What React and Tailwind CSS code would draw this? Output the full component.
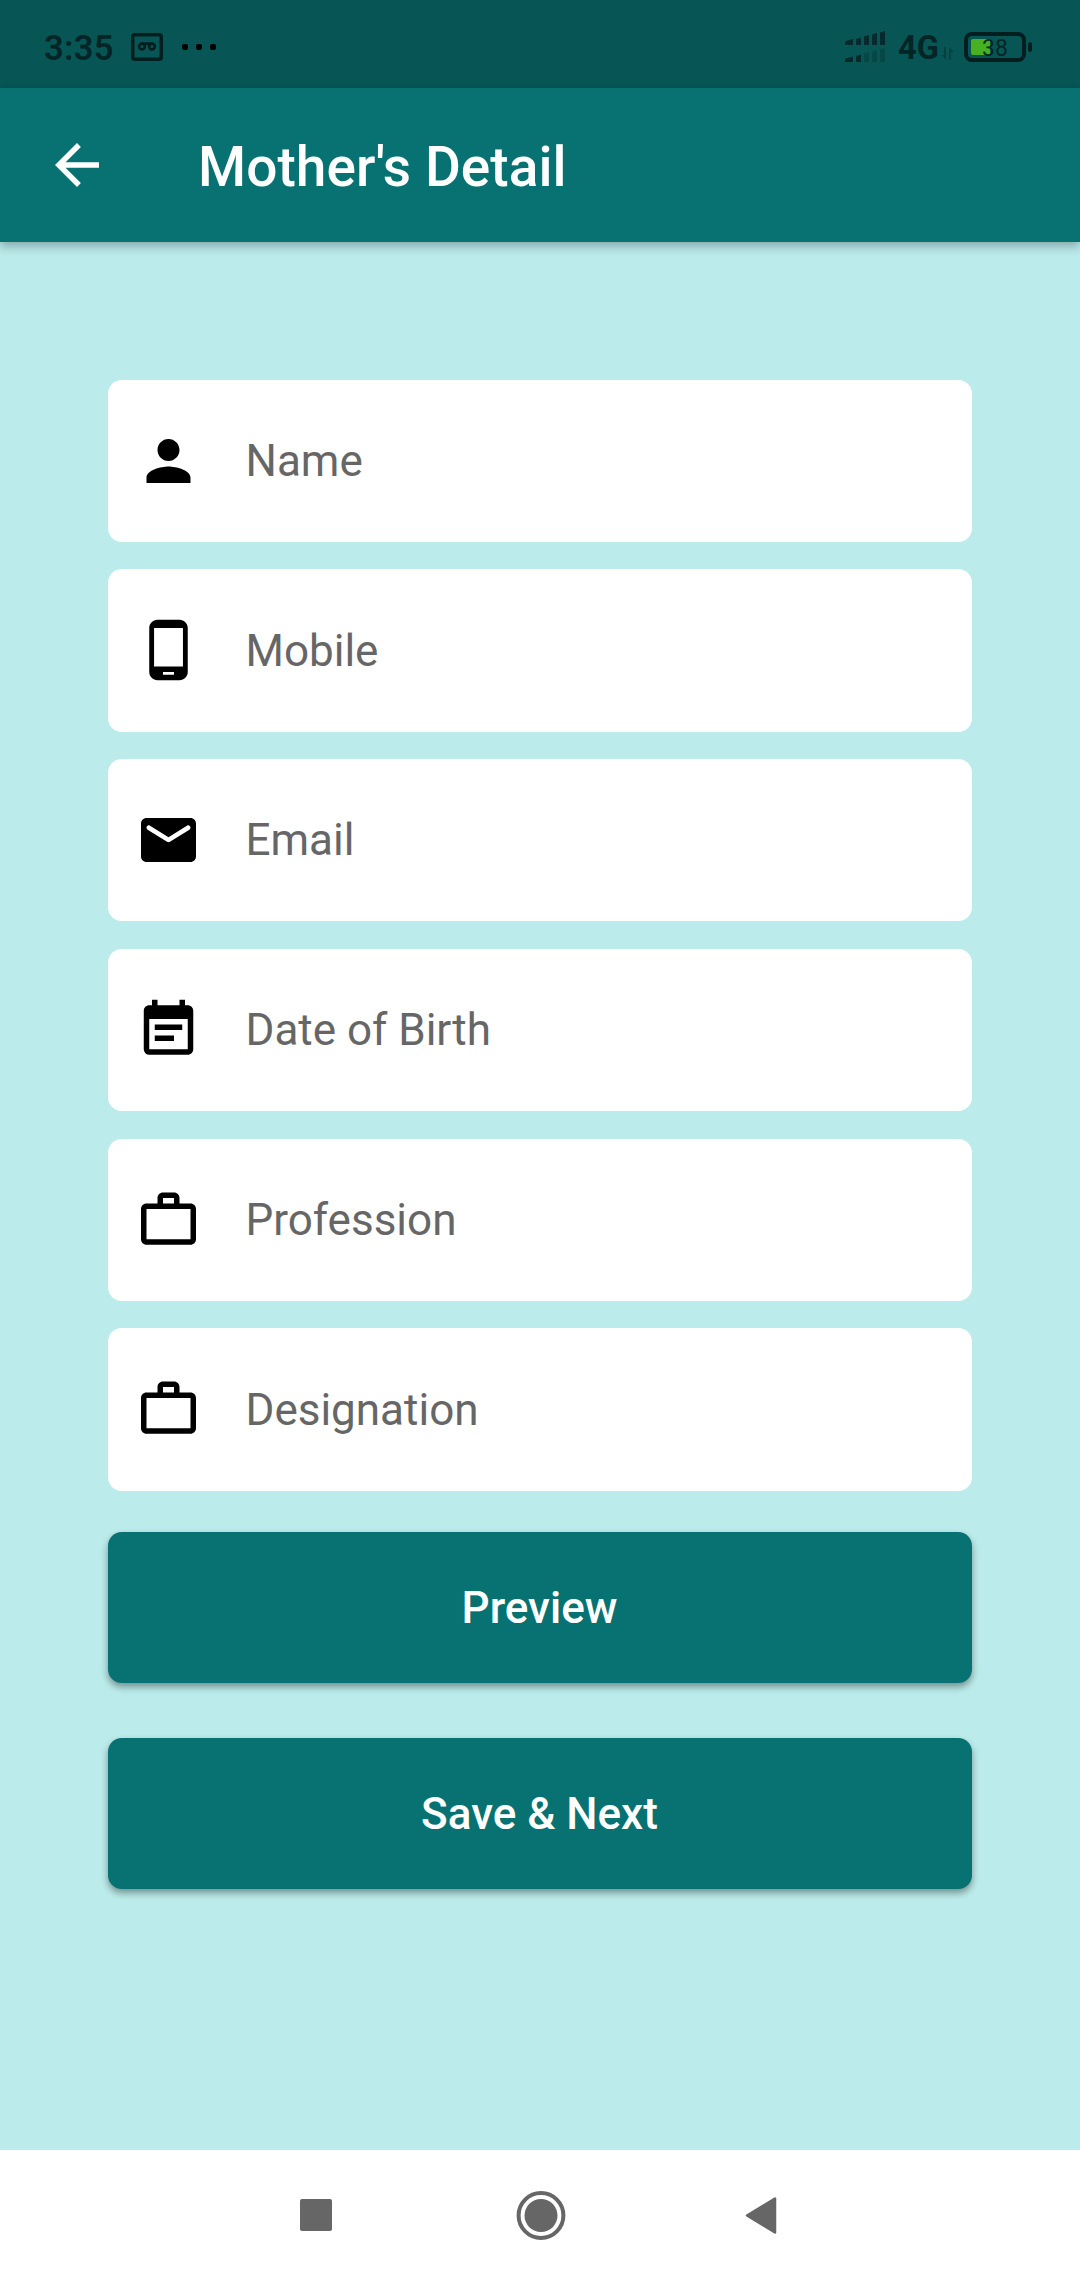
import { MdArrowBack, MdEventNote, MdPerson, MdPhoneAndroid, MdWorkOutline } from "react-icons/md";

function MailIcon({ className }) {
  return (
    <svg viewBox="0 0 24 24" fill="currentColor" className={className}>
      <path d="M20 4H4c-1.1 0-2 .9-2 2v12c0 1.1.9 2 2 2h16c1.1 0 2-.9 2-2V6c0-1.1-.9-2-2-2zm-.4 4.25l-7.07 4.42c-.32.2-.74.2-1.06 0L4.4 8.25c-.25-.16-.4-.43-.4-.72 0-.67.73-1.07 1.3-.72L12 11l6.7-4.19c.57-.35 1.3.05 1.3.72 0 .29-.15.56-.4.72z" />
    </svg>
  );
}

function VoicemailIcon() {
  return (
    <svg viewBox="0 0 32 28" fill="none" stroke="#021f20" className="ml-[18px] h-7 w-8 shrink-0">
      <rect x="1.75" y="1.75" width="28.500" height="24.500" rx="2" strokeWidth="3.500" />
      <circle cx="11" cy="13.500" r="2.900" strokeWidth="2.600" />
      <circle cx="21" cy="13.500" r="2.900" strokeWidth="2.600" />
      <path d="M11 10.600h10" strokeWidth="2.600" />
    </svg>
  );
}

function SignalIcon() {
  return (
    <svg viewBox="0 0 41 32" fill="#042b2c" className="h-8 w-[41px] shrink-0">
      <path d="M0 11.5L1 10l7-2v6H0zM11 8l5-1.5V14h-5zM19 5.5L24 4v10h-5zM27 3.5L32 2v12h-5zM35 1.5L40 0v14h-5z" />
      <path d="M0 28.500L1 27.500l7-2V31H0zM11 25l5-1.500V31h-5z" />
      <path d="M19 22.500L24 21v10h-5zM27 20.500l5-1.500v12h-5zM35 18.500l5-1.500v14h-5z" fill="#064848" />
    </svg>
  );
}

function DataArrows() {
  return (
    <svg viewBox="0 0 13 13" fill="#064041" className="mt-3 ml-[4px] h-[13px] w-[13px] shrink-0">
      <path d="M3 0h2v12.500L0 8h3zM8 12.500h2V5h3L8 0z" />
    </svg>
  );
}

function Battery() {
  return (
    <div className="ml-[10px] flex items-center gap-[2px]">
      <div className="relative flex h-[30px] w-[62px] items-center rounded-[8px] border-4 border-[#021f20] pl-[3px]">
        <div className="h-4 w-[19px] rounded-[2px] bg-[#48b121]" />
        <span className="absolute inset-0 flex items-center justify-center pt-[2px] text-[23px] leading-none text-[#021f20]/90">
          38
        </span>
      </div>
      <div className="h-[10px] w-1 rounded-[2px] bg-[#021f20]" />
    </div>
  );
}

function StatusBar() {
  return (
    <div className="flex h-[88px] items-center bg-[#085555] pt-[6px] pr-12 pl-11 text-[#042526]">
      <span className="w-[69px] whitespace-nowrap pt-[2px] text-[34.5px] leading-none font-semibold tracking-[0.3px]">3:35</span>
      <VoicemailIcon />
      <div className="ml-[19px] flex gap-2">
        <i className="size-[6px] rounded-[2px] bg-black" />
        <i className="size-[6px] rounded-[2px] bg-black" />
        <i className="size-[6px] rounded-[2px] bg-black" />
      </div>
      <div className="ml-auto flex items-center">
        <SignalIcon />
        <span className="ml-[12px] w-[39px] whitespace-nowrap pt-[2px] text-[32.5px] leading-none font-bold">4G</span>
        <DataArrows />
        <Battery />
      </div>
    </div>
  );
}

const FIELDS = [
  { label: "Name", Icon: MdPerson },
  { label: "Mobile", Icon: MdPhoneAndroid },
  { label: "Email", Icon: MailIcon },
  { label: "Date of Birth", Icon: MdEventNote },
  { label: "Profession", Icon: MdWorkOutline },
  { label: "Designation", Icon: MdWorkOutline },
];

function Field({ label, Icon }) {
  return (
    <label className="flex h-[162.25px] items-center rounded-[13.75px] bg-white pl-[27px]">
      <Icon className="size-[66px] shrink-0 translate-x-[0.5px] text-black" />
      <span className="ml-[44.5px] pt-[0.5px] text-[44px] leading-none text-[#666]">{label}</span>
    </label>
  );
}

function ActionButton({ children }) {
  return (
    <button className="h-[151.25px] w-full rounded-[13.75px] bg-[#087272] pt-px pr-px text-[44px] leading-none font-medium text-white shadow-[0_4px_7px_rgba(0,0,0,0.38)]">
      {children}
    </button>
  );
}

function NavBar() {
  return (
    <nav className="flex h-[130px] items-center justify-between bg-white pr-[303px] pl-[300px] text-[#666]">
      <div className="size-8 rounded-[2px] bg-current" />
      <svg viewBox="0 0 50 50" className="ml-[4px] size-[50px]">
        <circle cx="25" cy="25.500" r="22.400" fill="none" stroke="currentColor" strokeWidth="4" />
        <circle cx="25" cy="25.500" r="16.500" fill="currentColor" />
      </svg>
      <svg viewBox="0 0 32 38" className="h-[38px] w-8">
        <path d="M2 19.500L30 2.500v34z" fill="currentColor" stroke="currentColor" strokeWidth="2.500" strokeLinejoin="round" />
      </svg>
    </nav>
  );
}

export default function App() {
  return (
    <div className="flex h-[2280px] w-[1080px] flex-col bg-[#bbebea] font-['Roboto',sans-serif]">
      <StatusBar />
      <header className="flex h-[154px] items-center bg-[#087272] pl-11 text-white shadow-[0_4px_10px_rgba(0,0,0,0.3)]">
        <MdArrowBack className="size-[66px]" />
        <h1 className="ml-[88px] pt-[4px] text-[55px] leading-none font-medium tracking-[0.05px]">Mother's Detail</h1>
      </header>
      <main className="flex-1 px-[108px] pt-[137.5px]">
        <div className="flex flex-col gap-[27.5px]">
          {FIELDS.map((f) => (
            <Field key={f.label} label={f.label} Icon={f.Icon} />
          ))}
        </div>
        <div className="mt-[41.25px] flex flex-col gap-[55px]">
          <ActionButton>Preview</ActionButton>
          <ActionButton>Save &amp; Next</ActionButton>
        </div>
      </main>
      <NavBar />
    </div>
  );
}
